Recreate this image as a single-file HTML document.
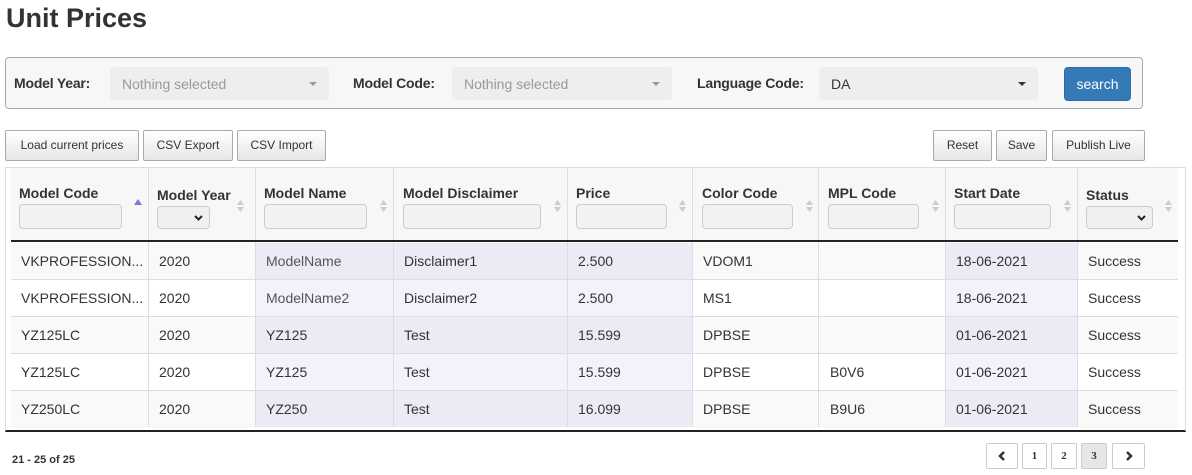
<!DOCTYPE html>
<html><head><meta charset="utf-8"><style>
*{box-sizing:border-box;margin:0;padding:0}
body{width:1192px;height:475px;background:#fff;font-family:"Liberation Sans",sans-serif;color:#333;position:relative;overflow:hidden}
.a{position:absolute}
h1{position:absolute;left:6px;top:3px;font-size:27px;font-weight:bold;color:#333}
.fbox{left:5px;top:57px;width:1138px;height:52px;background:#f7f7f7;border:1px solid #aaa;border-radius:4px}
.lbl{font-size:14px;font-weight:bold;color:#333;top:75px;letter-spacing:-0.2px}
.sel{height:33px;top:67px;background:#eee;border-radius:4px;font-size:14px;color:#999;padding:9px 12px}
.caret{position:absolute;right:12px;top:15px;border-left:4px solid transparent;border-right:4px solid transparent;border-top:4px solid #999}
.btn{top:130px;height:31px;border:1px solid #aaa;border-radius:2px;background:linear-gradient(#fff,#e6e6e6);font-size:12px;color:#333;text-align:center;line-height:29px}
.tw{left:5px;top:167px;width:1181px;height:265px;border:1px solid #ddd;border-bottom:2px solid #222;background:#fff}
.hdr{left:11px;top:168px;width:1167px;height:74px;background:#f7f7f7;border-bottom:2px solid #222}
.col{position:absolute;top:168px;height:259px;border-left:1px solid #ddd}
.ht{position:absolute;font-size:14px;font-weight:bold;color:#333}
.hi{position:absolute;top:204px;height:25px;border:1px solid #ccc;border-radius:4px;background:#f2f2f2}
.sort{position:absolute;top:199px;width:7px;height:14px}
.row{position:absolute;left:11px;width:1167px;height:37px}
.c{position:absolute;font-size:14px;color:#333;line-height:37px}
.pg{top:443px;height:26px;border:1px solid #ccc;border-radius:2px;background:#fff;font-size:11px;font-family:"Liberation Serif",serif;font-weight:bold;text-align:center;line-height:24px}
.chev{position:absolute;right:6px;top:6px}
</style></head><body>
<h1>Unit Prices</h1>
<div class="a fbox"></div>
<div class="a lbl" style="left:14px">Model Year:</div>
<div class="a sel" style="left:110px;width:219px">Nothing selected<span class="caret"></span></div>
<div class="a lbl" style="left:353px">Model Code:</div>
<div class="a sel" style="left:452px;width:220px">Nothing selected<span class="caret"></span></div>
<div class="a lbl" style="left:697px">Language Code:</div>
<div class="a sel" style="left:819px;width:219px;color:#333">DA<span class="caret" style="border-top-color:#333"></span></div>
<div class="a" style="left:1064px;top:67px;width:67px;height:34px;background:#337ab7;border:1px solid #2e6da4;border-radius:4px;color:#fff;font-size:14px;text-align:center;line-height:32px">search</div>

<div class="a btn" style="left:5px;width:134px">Load current prices</div>
<div class="a btn" style="left:143px;width:90px">CSV Export</div>
<div class="a btn" style="left:237px;width:89px">CSV Import</div>
<div class="a btn" style="left:933px;width:59px">Reset</div>
<div class="a btn" style="left:996px;width:51px">Save</div>
<div class="a btn" style="left:1052px;width:93px">Publish Live</div>

<div class="a tw"></div>
<div class="a hdr"></div>

<div class="row" style="top:243px;background:#f9f9f9"></div>
<div class="row" style="top:280px;background:#fff"></div>
<div class="row" style="top:317px;background:#f9f9f9"></div>
<div class="row" style="top:354px;background:#fff"></div>
<div class="row" style="top:391px;background:#f9f9f9"></div>
<div class="a" style="left:255px;top:243px;width:437px;height:37px;background:#ebebf5"></div>
<div class="a" style="left:945px;top:243px;width:132px;height:37px;background:#ebebf5"></div>
<div class="a" style="left:255px;top:280px;width:437px;height:37px;background:#f2f2fc"></div>
<div class="a" style="left:945px;top:280px;width:132px;height:37px;background:#f2f2fc"></div>
<div class="a" style="left:255px;top:317px;width:437px;height:37px;background:#ebebf5"></div>
<div class="a" style="left:945px;top:317px;width:132px;height:37px;background:#ebebf5"></div>
<div class="a" style="left:255px;top:354px;width:437px;height:37px;background:#f2f2fc"></div>
<div class="a" style="left:945px;top:354px;width:132px;height:37px;background:#f2f2fc"></div>
<div class="a" style="left:255px;top:391px;width:437px;height:36px;background:#ebebf5"></div>
<div class="a" style="left:945px;top:391px;width:132px;height:36px;background:#ebebf5"></div>
<div class="a" style="left:11px;top:279px;width:1167px;height:1px;background:#ddd"></div>
<div class="a" style="left:11px;top:316px;width:1167px;height:1px;background:#ddd"></div>
<div class="a" style="left:11px;top:353px;width:1167px;height:1px;background:#ddd"></div>
<div class="a" style="left:11px;top:390px;width:1167px;height:1px;background:#ddd"></div>

<div class="col" style="left:148px"></div>
<div class="col" style="left:255px"></div>
<div class="col" style="left:393px"></div>
<div class="col" style="left:567px"></div>
<div class="col" style="left:692px"></div>
<div class="col" style="left:818px"></div>
<div class="col" style="left:945px"></div>
<div class="col" style="left:1077px"></div>
<div class="a" style="left:11px;top:240px;width:1167px;height:2px;background:#222"></div>

<div class="ht" style="left:19px;top:185px">Model Code</div>
<div class="hi" style="left:19px;width:103px"></div>
<div class="a" style="left:134px;top:199px;border-left:4px solid transparent;border-right:4px solid transparent;border-bottom:6px solid #7b7bd6"></div>
<div class="ht" style="left:157px;top:187px">Model Year</div>
<div class="hi" style="left:157px;top:206px;width:53px;height:23px;background:#f0f0f0"><svg class="chev" width="9" height="9" viewBox="0 0 9 9"><path d="M1 3L4.5 6.5L8 3" stroke="#222" stroke-width="2" fill="none"/></svg></div>
<div class="ht" style="left:264px;top:185px">Model Name</div>
<div class="hi" style="left:264px;width:103px"></div>
<div class="ht" style="left:403px;top:185px">Model Disclaimer</div>
<div class="hi" style="left:403px;width:138px"></div>
<div class="ht" style="left:576px;top:185px">Price</div>
<div class="hi" style="left:576px;width:91px"></div>
<div class="ht" style="left:702px;top:185px">Color Code</div>
<div class="hi" style="left:702px;width:91px"></div>
<div class="ht" style="left:828px;top:185px">MPL Code</div>
<div class="hi" style="left:828px;width:91px"></div>
<div class="ht" style="left:954px;top:185px">Start Date</div>
<div class="hi" style="left:954px;width:97px"></div>
<div class="ht" style="left:1086px;top:187px">Status</div>
<div class="hi" style="left:1086px;top:206px;width:67px;height:23px;background:#f0f0f0"><svg class="chev" width="9" height="9" viewBox="0 0 9 9"><path d="M1 3L4.5 6.5L8 3" stroke="#222" stroke-width="2" fill="none"/></svg></div>
<svg class="sort" style="left:237px" viewBox="0 0 7 14"><path d="M0 6L3.5 1L7 6Z M0 8L3.5 13L7 8Z" fill="#ccc"/></svg>
<svg class="sort" style="left:380px" viewBox="0 0 7 14"><path d="M0 6L3.5 1L7 6Z M0 8L3.5 13L7 8Z" fill="#ccc"/></svg>
<svg class="sort" style="left:554px" viewBox="0 0 7 14"><path d="M0 6L3.5 1L7 6Z M0 8L3.5 13L7 8Z" fill="#ccc"/></svg>
<svg class="sort" style="left:679px" viewBox="0 0 7 14"><path d="M0 6L3.5 1L7 6Z M0 8L3.5 13L7 8Z" fill="#ccc"/></svg>
<svg class="sort" style="left:806px" viewBox="0 0 7 14"><path d="M0 6L3.5 1L7 6Z M0 8L3.5 13L7 8Z" fill="#ccc"/></svg>
<svg class="sort" style="left:932px" viewBox="0 0 7 14"><path d="M0 6L3.5 1L7 6Z M0 8L3.5 13L7 8Z" fill="#ccc"/></svg>
<svg class="sort" style="left:1064px" viewBox="0 0 7 14"><path d="M0 6L3.5 1L7 6Z M0 8L3.5 13L7 8Z" fill="#ccc"/></svg>
<svg class="sort" style="left:1165px" viewBox="0 0 7 14"><path d="M0 6L3.5 1L7 6Z M0 8L3.5 13L7 8Z" fill="#ccc"/></svg>

<div class="c" style="left:21px;top:243px">VKPROFESSION...</div><div class="c" style="left:159px;top:243px">2020</div><div class="c" style="left:266px;top:243px;color:#555">ModelName</div><div class="c" style="left:404px;top:243px">Disclaimer1</div><div class="c" style="left:578px;top:243px">2.500</div><div class="c" style="left:703px;top:243px">VDOM1</div><div class="c" style="left:956px;top:243px">18-06-2021</div><div class="c" style="left:1088px;top:243px">Success</div>
<div class="c" style="left:21px;top:280px">VKPROFESSION...</div><div class="c" style="left:159px;top:280px">2020</div><div class="c" style="left:266px;top:280px;color:#555">ModelName2</div><div class="c" style="left:404px;top:280px">Disclaimer2</div><div class="c" style="left:578px;top:280px">2.500</div><div class="c" style="left:703px;top:280px">MS1</div><div class="c" style="left:956px;top:280px">18-06-2021</div><div class="c" style="left:1088px;top:280px">Success</div>
<div class="c" style="left:21px;top:317px">YZ125LC</div><div class="c" style="left:159px;top:317px">2020</div><div class="c" style="left:266px;top:317px">YZ125</div><div class="c" style="left:404px;top:317px">Test</div><div class="c" style="left:578px;top:317px">15.599</div><div class="c" style="left:703px;top:317px">DPBSE</div><div class="c" style="left:956px;top:317px">01-06-2021</div><div class="c" style="left:1088px;top:317px">Success</div>
<div class="c" style="left:21px;top:354px">YZ125LC</div><div class="c" style="left:159px;top:354px">2020</div><div class="c" style="left:266px;top:354px">YZ125</div><div class="c" style="left:404px;top:354px">Test</div><div class="c" style="left:578px;top:354px">15.599</div><div class="c" style="left:703px;top:354px">DPBSE</div><div class="c" style="left:830px;top:354px">B0V6</div><div class="c" style="left:956px;top:354px">01-06-2021</div><div class="c" style="left:1088px;top:354px">Success</div>
<div class="c" style="left:21px;top:391px">YZ250LC</div><div class="c" style="left:159px;top:391px">2020</div><div class="c" style="left:266px;top:391px">YZ250</div><div class="c" style="left:404px;top:391px">Test</div><div class="c" style="left:578px;top:391px">16.099</div><div class="c" style="left:703px;top:391px">DPBSE</div><div class="c" style="left:830px;top:391px">B9U6</div><div class="c" style="left:956px;top:391px">01-06-2021</div><div class="c" style="left:1088px;top:391px">Success</div>

<div class="a" style="left:12px;top:454px;font-size:11px;font-weight:bold;color:#333">21 - 25 of 25</div>
<div class="a pg" style="left:986px;width:32px">
<svg width="8" height="10" viewBox="0 0 8 10" style="margin-top:7px"><path d="M6 1L2 5L6 9" stroke="#333" stroke-width="2.5" fill="none"/></svg></div>
<div class="a pg" style="left:1022px;width:25px">1</div>
<div class="a pg" style="left:1051px;width:26px">2</div>
<div class="a pg" style="left:1081px;width:26px;background:#e6e6e6">3</div>
<div class="a pg" style="left:1112px;width:33px">
<svg width="8" height="10" viewBox="0 0 8 10" style="margin-top:7px"><path d="M2 1L6 5L2 9" stroke="#333" stroke-width="2.5" fill="none"/></svg></div>
</body></html>
